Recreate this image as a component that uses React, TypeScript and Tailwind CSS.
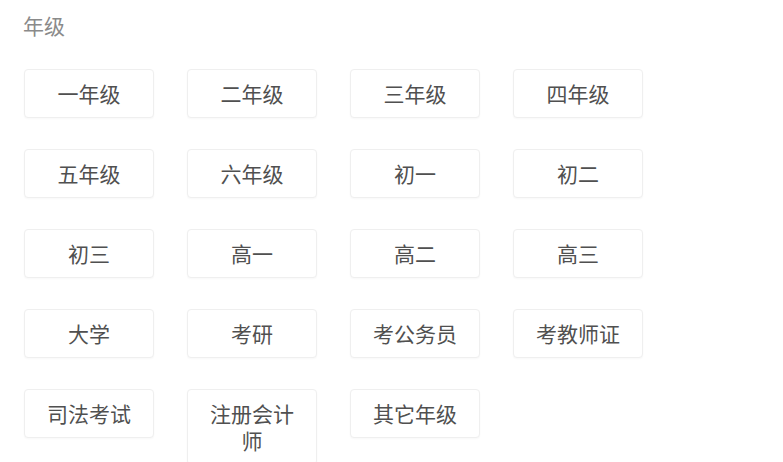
import React from "react";

const items = [
  "一年级", "二年级", "三年级", "四年级",
  "五年级", "六年级", "初一", "初二",
  "初三", "高一", "高二", "高三",
  "大学", "考研", "考公务员", "考教师证",
  "司法考试", "注册会计师", "其它年级",
];

export default function App() {
  return (
    <div
      className="w-[783px] h-[462px] overflow-hidden bg-white pl-[24px] pt-[10px]"
      style={{ fontFamily: '"Noto Sans CJK SC", "Noto Sans", sans-serif' }}
    >
      <div className="text-[21px] leading-[30px] text-[#8a8a8a] -ml-[1px]">年级</div>
      <div className="mt-[29px] grid grid-cols-[repeat(4,130px)] gap-x-[33px] gap-y-[31px] items-start">
        {items.map((t) => (
          <div
            key={t}
            className="border border-[#efefef] rounded-[4px] bg-white px-[14px] py-[10px] text-center text-[21px] leading-[27px] text-[#505050] shadow-[0_1px_2px_rgba(0,0,0,0.03)]"
          >
            {t}
          </div>
        ))}
      </div>
    </div>
  );
}
